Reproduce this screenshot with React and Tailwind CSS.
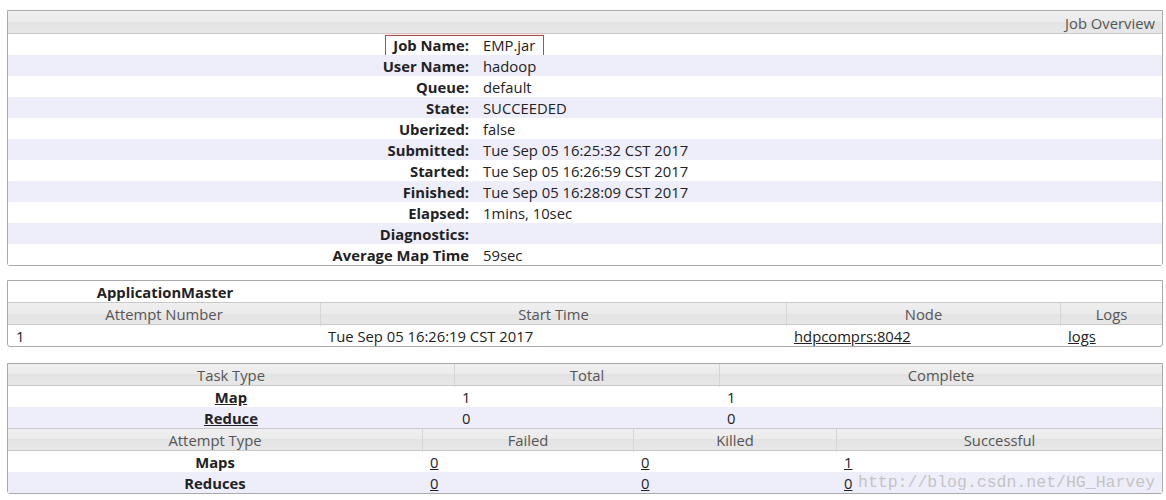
const font = { fontFamily: '"Open Sans", "Noto Sans", sans-serif' };

const overview = [
  ["Job Name:", "EMP.jar"],
  ["User Name:", "hadoop"],
  ["Queue:", "default"],
  ["State:", "SUCCEEDED"],
  ["Uberized:", "false"],
  ["Submitted:", "Tue Sep 05 16:25:32 CST 2017"],
  ["Started:", "Tue Sep 05 16:26:59 CST 2017"],
  ["Finished:", "Tue Sep 05 16:28:09 CST 2017"],
  ["Elapsed:", "1mins, 10sec"],
  ["Diagnostics:", ""],
  ["Average Map Time", "59sec"],
];

const headBg =
  "bg-[linear-gradient(#efefef_0%,#ebebeb_50%,#e3e3e3_50%,#e7e7e7_100%)]";

// header row of a table, cells split by light separators
function HeadRow({ cols, labels, top = false }) {
  return (
    <div
      className={`grid ${top ? "h-[23px] border-t" : "h-[22px]"} ${headBg} border-b border-[#c9c9c9] text-[#555]`}
      style={{ gridTemplateColumns: cols }}
    >
      {labels.map((l, i) => (
        <div
          key={l}
          className={`text-center leading-[23px] ${i > 0 ? "border-l border-[#d6d6d6]" : ""}`}
        >
          {l}
        </div>
      ))}
    </div>
  );
}

export default function App() {
  return (
    <div className="bg-white text-[14.8px] text-[#222] pt-[10px] pb-[6px]" style={font}>
      {/* Job overview */}
      <div className="ml-[7px] w-[1156px] border border-[#a9a9a9] rounded-b-[3px]">
        <div className={`h-[23px] ${headBg} border-b border-[#c9c9c9] text-right pr-[7px] leading-[24px] text-[#555]`}>
          Job Overview
        </div>
        {overview.map(([k, v], i) => (
          <div
            key={k}
            className={`relative grid grid-cols-[468px_1fr] h-[21px] leading-[23px] ${i % 2 ? "bg-[#eeeefa]" : "bg-white"}`}
          >
            <div className="text-right pr-[7px] font-bold">{k}</div>
            <div className="pl-[7px]">{v}</div>
            {/* annotation box drawn over the first row */}
            {i === 0 && (
              <div className="absolute left-[377px] top-px w-[159px] h-[22px] border border-solid border-[#ee3333]" />
            )}
          </div>
        ))}
      </div>

      {/* ApplicationMaster */}
      <div className="ml-[7px] mt-[14px] w-[1156px] border border-[#a9a9a9] rounded-b-[3px]">
        <div className="grid grid-cols-[312px_1fr] h-[21px] leading-[23px]">
          <div className="text-center font-bold pl-[2px]">ApplicationMaster</div>
        </div>
        <HeadRow
          top
          cols="312px 466px 274px 1fr"
          labels={["Attempt Number", "Start Time", "Node", "Logs"]}
        />
        <div className="grid grid-cols-[312px_466px_274px_1fr] h-[21px] leading-[23px]">
          <div className="pl-[8px]">1</div>
          <div className="pl-[8px]">Tue Sep 05 16:26:19 CST 2017</div>
          <div className="pl-[8px]">
            <a className="underline" href="#">hdpcomprs:8042</a>
          </div>
          <div className="pl-[8px]">
            <a className="underline" href="#">logs</a>
          </div>
        </div>
      </div>

      {/* Task summary */}
      <div className="relative ml-[7px] mt-[16px] w-[1156px] border border-[#a9a9a9] rounded-b-[3px]">
        <HeadRow cols="446px 265px 1fr" labels={["Task Type", "Total", "Complete"]} />
        {[
          ["Map", "1", "1"],
          ["Reduce", "0", "0"],
        ].map(([t, a, b], i) => (
          <div
            key={t}
            className={`grid grid-cols-[446px_265px_1fr] h-[21px] leading-[23px] ${i % 2 ? "bg-[#eeeefa]" : "bg-white"}`}
          >
            <div className="text-center font-bold">
              <a className="underline" href="#">{t}</a>
            </div>
            <div className="pl-[8px]">{a}</div>
            <div className="pl-[8px]">{b}</div>
          </div>
        ))}
        <HeadRow
          top
          cols="414px 211px 203px 1fr"
          labels={["Attempt Type", "Failed", "Killed", "Successful"]}
        />
        {[
          ["Maps", "0", "0", "1"],
          ["Reduces", "0", "0", "0"],
        ].map(([t, f, k, s], i) => (
          <div
            key={t}
            className={`grid grid-cols-[414px_211px_203px_1fr] h-[21px] leading-[23px] ${i % 2 ? "bg-[#eeeefa]" : "bg-white"}`}
          >
            <div className="text-center font-bold">{t}</div>
            <div className="pl-[8px]"><a className="underline" href="#">{f}</a></div>
            <div className="pl-[8px]"><a className="underline" href="#">{k}</a></div>
            <div className="pl-[8px]"><a className="underline" href="#">{s}</a></div>
          </div>
        ))}
        {/* watermark */}
        <div
          className="absolute left-[850px] top-[111px] text-[16.5px] leading-none text-[#c4c4c4] whitespace-nowrap pointer-events-none"
          style={{ fontFamily: '"Liberation Mono", monospace' }}
        >
          http://blog.csdn.net/HG_Harvey
        </div>
      </div>
    </div>
  );
}
